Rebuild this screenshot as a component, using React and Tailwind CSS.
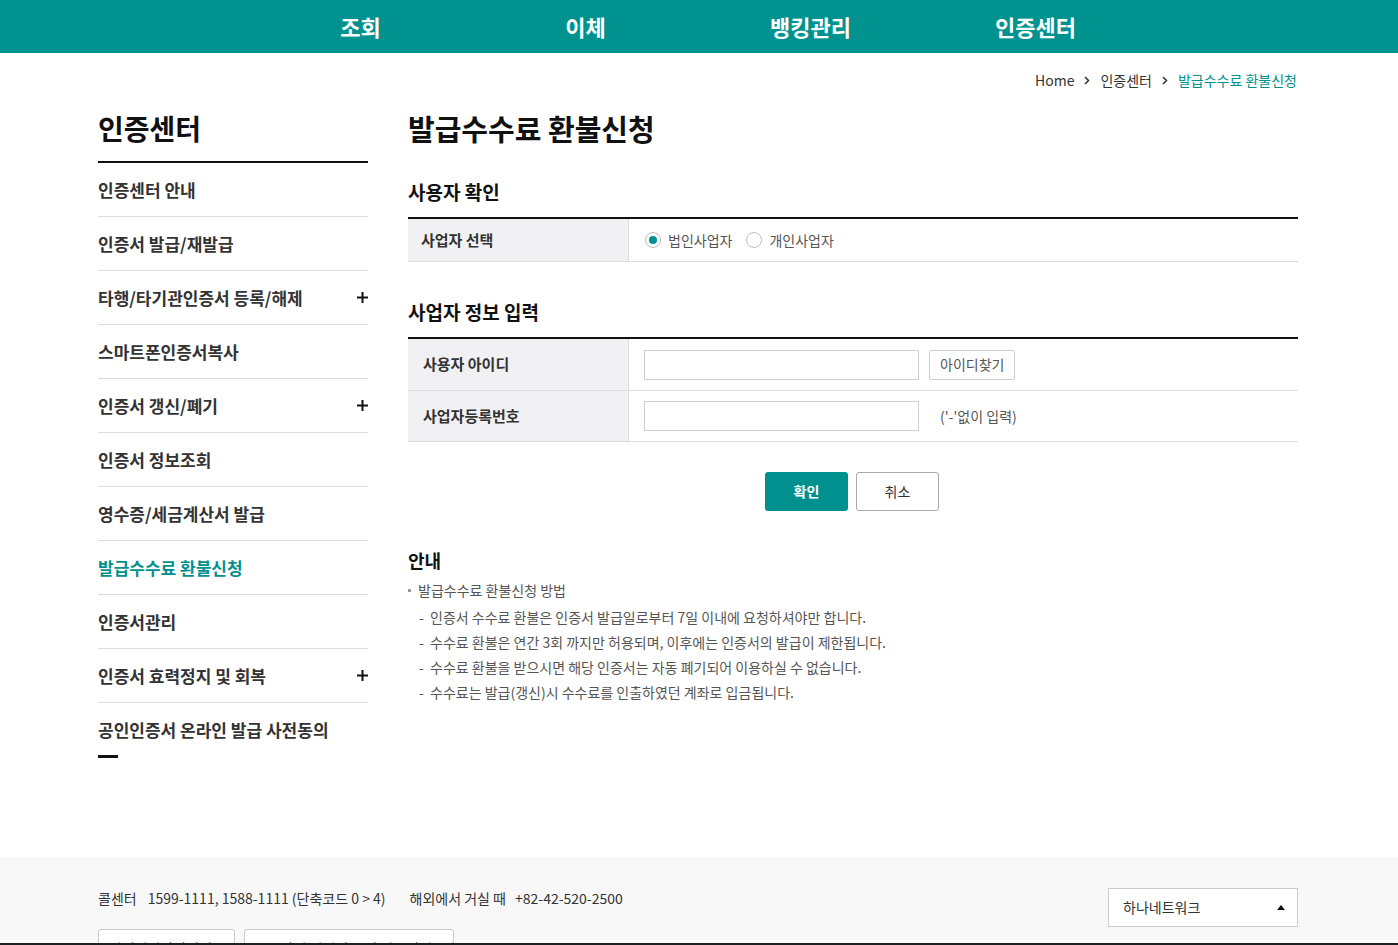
import React from "react";

const font = { fontFamily: '"Noto Sans CJK KR", "Noto Sans", sans-serif' };

const menu = [
  { t: "인증센터 안내" },
  { t: "인증서 발급/재발급" },
  { t: "타행/타기관인증서 등록/해제", plus: true },
  { t: "스마트폰인증서복사" },
  { t: "인증서 갱신/폐기", plus: true },
  { t: "인증서 정보조회" },
  { t: "영수증/세금계산서 발급" },
  { t: "발급수수료 환불신청", active: true },
  { t: "인증서관리" },
  { t: "인증서 효력정지 및 회복", plus: true },
  { t: "공인인증서 온라인 발급 사전동의", last: true },
];

function Plus() {
  return (
    <svg width="11" height="11" viewBox="0 0 11 11">
      <rect x="4.5" y="0" width="2" height="11" fill="#111" />
      <rect x="0" y="4.5" width="11" height="2" fill="#111" />
    </svg>
  );
}

function Chevron() {
  return (
    <svg width="6" height="9" viewBox="0 0 6 9" className="mx-[10px]">
      <path d="M1 1l3.5 3.5L1 8" stroke="#333" strokeWidth="1.5" fill="none" />
    </svg>
  );
}

function Radio({ checked, label }) {
  return (
    <label className="flex items-center">
      <span className="w-[16px] h-[16px] rounded-full border border-[#bdbdbd] bg-white flex items-center justify-center">
        {checked && <span className="w-[8px] h-[8px] rounded-full bg-[#00918e]" />}
      </span>
      <span className="ml-[7px] text-[14px] text-[#555]">{label}</span>
    </label>
  );
}

export default function App() {
  return (
    <div style={font} className="h-[945px] overflow-hidden bg-white flex flex-col text-[#333] relative">
      {/* top nav */}
      <div className="h-[53px] bg-[#00928e] shrink-0">
        <ul className="mx-auto w-[900px] grid grid-cols-4 h-full -translate-x-[1px]">
          {["조회", "이체", "뱅킹관리", "인증센터"].map((m) => (
            <li key={m} className="flex items-center justify-center text-white text-[22px] font-bold">
              {m}
            </li>
          ))}
        </ul>
      </div>

      <div className="mx-auto w-[1202px] pr-[2px] shrink-0">
        {/* breadcrumb */}
        <div className="h-[54px] flex items-center justify-end text-[14px] pr-[1px]">
          <span className="text-[#333]">Home</span>
          <Chevron />
          <span className="text-[#333]">인증센터</span>
          <Chevron />
          <span className="text-[#00918e]">발급수수료 환불신청</span>
        </div>

        <div className="flex gap-[40px] h-[750px]">
          {/* sidebar */}
          <div className="w-[270px] shrink-0">
            <h2 className="text-[28px] font-bold leading-[42px] pb-[12px] border-b-2 border-[#111] text-[#111]">인증센터</h2>
            <ul>
              {menu.map((m) => (
                <li
                  key={m.t}
                  className={
                    "h-[54px] flex items-center justify-between text-[17px] font-bold " +
                    (m.last ? "" : "border-b border-[#dcdcdc] ") +
                    (m.active ? "text-[#00918e]" : "text-[#333]")
                  }
                >
                  <span>{m.t}</span>
                  {m.plus && <Plus />}
                </li>
              ))}
            </ul>
            <div className="w-[20px] h-[3px] bg-[#111] -mt-[2px]" />
          </div>

          {/* content */}
          <div className="flex-1">
            <h1 className="text-[29px] font-bold leading-[42px] text-[#111]">발급수수료 환불신청</h1>

            <h3 className="mt-[28px] mb-[10px] text-[19px] font-bold leading-[30px] text-[#111]">사용자 확인</h3>
            <div className="border-t-2 border-[#111]">
              <div className="flex h-[43px] border-b border-[#dcdcdc]">
                <div className="w-[221px] bg-[#f1f1f3] border-r border-[#dcdcdc] flex items-center pl-[13px] text-[15px] font-bold text-[#333]">
                  사업자 선택
                </div>
                <div className="flex items-center pl-[16px] gap-[14px]">
                  <Radio checked label="법인사업자" />
                  <Radio label="개인사업자" />
                </div>
              </div>
            </div>

            <h3 className="mt-[35px] mb-[10px] text-[19px] font-bold leading-[30px] text-[#111]">사업자 정보 입력</h3>
            <div className="border-t-2 border-[#111]">
              <div className="flex h-[52px] border-b border-[#dcdcdc]">
                <div className="w-[221px] bg-[#f1f1f3] border-r border-[#dcdcdc] flex items-center pl-[15px] text-[15px] font-bold text-[#333]">
                  사용자 아이디
                </div>
                <div className="flex items-center pl-[15px]">
                  <div className="w-[275px] h-[30px] border border-[#cfcfcf] bg-white" />
                  <button className="ml-[10px] h-[30px] px-[10px] border border-[#cfcfcf] rounded-[2px] bg-white text-[14px] text-[#555]">
                    아이디찾기
                  </button>
                </div>
              </div>
              <div className="flex h-[51px] border-b border-[#dcdcdc]">
                <div className="w-[221px] bg-[#f1f1f3] border-r border-[#dcdcdc] flex items-center pl-[15px] text-[15px] font-bold text-[#333]">
                  사업자등록번호
                </div>
                <div className="flex items-center pl-[15px]">
                  <div className="w-[275px] h-[30px] border border-[#cfcfcf] bg-white" />
                  <span className="ml-[21px] text-[14px] text-[#555]">('-'없이 입력)</span>
                </div>
              </div>
            </div>

            <div className="mt-[30px] flex justify-center gap-[8px] pr-[2px]">
              <button className="w-[83px] h-[39px] rounded-[3px] bg-[#00918e] text-white text-[14px] font-bold">확인</button>
              <button className="w-[83px] h-[39px] rounded-[3px] bg-white border border-[#aaa] text-[#333] text-[14px]">취소</button>
            </div>

            <h4 className="mt-[36px] text-[18px] font-bold leading-[26px] text-[#111]">안내</h4>
            <div className="mt-[5px] flex items-center text-[14px] leading-[25px] text-[#555]">
              <span className="w-[3px] h-[3px] bg-[#999] mr-[7px]" />
              발급수수료 환불신청 방법
            </div>
            <ul className="mt-[2px] text-[14px] leading-[25px] text-[#555]">
              {[
                "인증서 수수료 환불은 인증서 발급일로부터 7일 이내에 요청하셔야만 합니다.",
                "수수료 환불은 연간 3회 까지만 허용되며, 이후에는 인증서의 발급이 제한됩니다.",
                "수수료 환불을 받으시면 해당 인증서는 자동 폐기되어 이용하실 수 없습니다.",
                "수수료는 발급(갱신)시 수수료를 인출하였던 계좌로 입금됩니다.",
              ].map((s) => (
                <li key={s} className="flex pl-[11px]">
                  <span className="w-[11px] shrink-0">-</span>
                  <span>{s}</span>
                </li>
              ))}
            </ul>
          </div>
        </div>
      </div>

      {/* footer */}
      <div className="flex-1 bg-[#f8f8f8]">
        <div className="mx-auto w-[1202px] pr-[2px] pt-[31px] flex justify-between">
          <div>
            <div className="h-[20px] flex items-center text-[14px] text-[#333]">
              <span>콜센터</span>
              <span className="ml-[11px]">1599-1111, 1588-1111 (단축코드 0 &gt; 4)</span>
              <span className="ml-[24px]">해외에서 거실 때</span>
              <span className="ml-[9px]">+82-42-520-2500</span>
            </div>
            <div className="mt-[21px] flex gap-[9px]">
              <div className="w-[137px] h-[36px] border border-[#ccc] rounded-[3px] bg-white text-[14px] pl-[10px] pt-[8px] whitespace-nowrap overflow-hidden">원격지원상담서비스</div>
              <div className="w-[210px] h-[36px] border border-[#ccc] rounded-[3px] bg-white text-[14px] pl-[10px] pt-[8px] whitespace-nowrap overflow-hidden">금융사기 피해신고 및 지급정지 조회</div>
            </div>
          </div>
          <div className="w-[190px] h-[39px] border border-[#ccc] bg-white flex items-center justify-between pl-[14px] pr-[12px]">
            <span className="text-[14px] text-[#333]">하나네트워크</span>
            <svg width="8" height="5" viewBox="0 0 8 5">
              <path d="M0 5L4 0L8 5Z" fill="#111" />
            </svg>
          </div>
        </div>
      </div>
      <div className="absolute left-0 right-0 bottom-0 h-[2px] bg-[#1f2023]" />
    </div>
  );
}
